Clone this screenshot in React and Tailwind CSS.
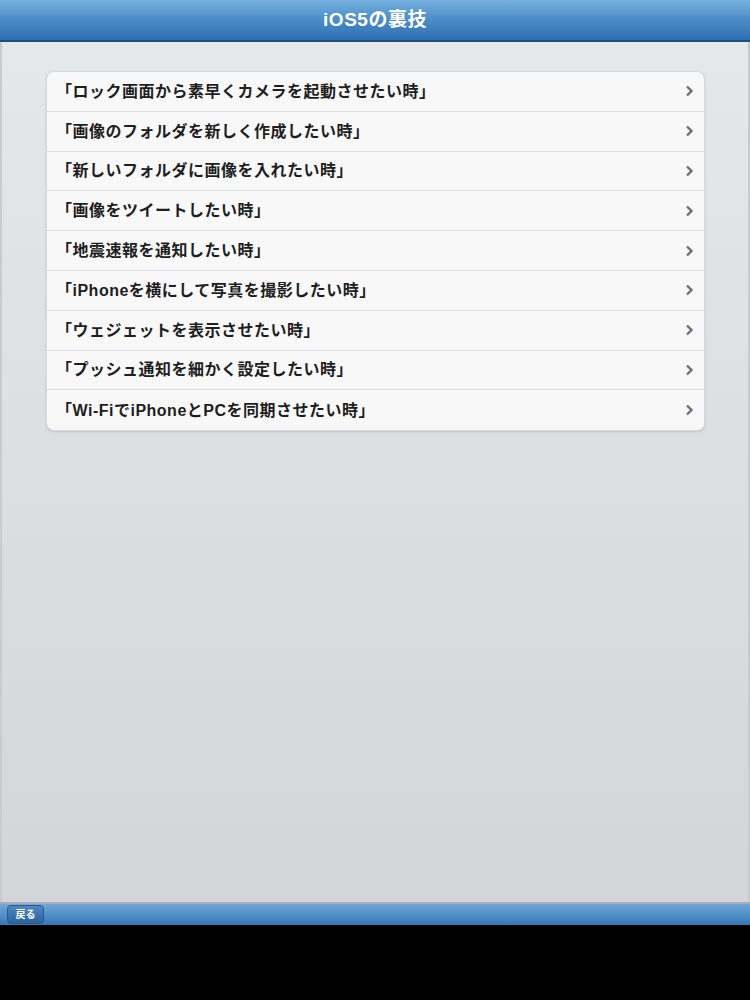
import React from "react";

const items = [
	"「ロック画面から素早くカメラを起動させたい時」",
	"「画像のフォルダを新しく作成したい時」",
	"「新しいフォルダに画像を入れたい時」",
	"「画像をツイートしたい時」",
	"「地震速報を通知したい時」",
	"「iPhoneを横にして写真を撮影したい時」",
	"「ウェジェットを表示させたい時」",
	"「プッシュ通知を細かく設定したい時」",
	"「Wi-FiでiPhoneとPCを同期させたい時」",
];

const Chevron = () => (
	<svg width="9" height="12" viewBox="0 0 9 12" className="shrink-0">
		<path d="M2 1.5 L6.5 6 L2 10.5" fill="none" stroke="#6b6f75" strokeWidth="2.4" />
	</svg>
);

const App = () => {
	return (
		<div
			className="w-[750px] h-[1000px] flex flex-col bg-black"
			style={{ fontFamily: '"Liberation Sans", "Noto Sans CJK JP", sans-serif' }}
		>
			<div className="h-[42px] shrink-0 flex items-center justify-center bg-gradient-to-b from-[#76b0de] via-[#4a8cc8] to-[#2e70b0] border-b-2 border-[#1f4e80]">
				<span className="text-white text-[19px] font-bold tracking-[0.5px]">iOS5の裏技</span>
			</div>
			<div className="flex-1 flex flex-col bg-gradient-to-b from-[#e6e7e9] to-[#d3d5d9] border-l-2 border-r-2 border-[#c9cbcf] pt-[29px] px-[44px]">
				<div className="w-[659px] rounded-lg bg-[#f8f8f9] border border-[#d6d8db] shadow-sm overflow-hidden">
					{items.map((t, i) => (
						<div
							key={i}
							className={
								"h-[39.8px] flex items-center justify-between pl-[9px] pr-[10px] " +
								(i < items.length - 1 ? "border-b border-[#dcdde0]" : "")
							}
						>
							<span className="text-[16px] font-bold text-[#1e1e1e] tracking-[0.5px] pt-[1px]">{t}</span>
							<Chevron />
						</div>
					))}
				</div>
			</div>
			<div className="h-[2px] bg-[#a9acb2] shrink-0" />
			<div className="h-[21px] shrink-0 flex items-center px-[7px] bg-gradient-to-b from-[#6fa8d8] to-[#3777b8]">
				<div className="h-[19px] w-[37px] flex items-center justify-center rounded-sm bg-gradient-to-b from-[#4e86c0] to-[#2b62a0] border border-[#2a5a8e]">
					<span className="text-white text-[10px] font-bold">戻る</span>
				</div>
			</div>
			<div className="h-[75px] shrink-0 bg-black" />
		</div>
	);
};

export default App;
